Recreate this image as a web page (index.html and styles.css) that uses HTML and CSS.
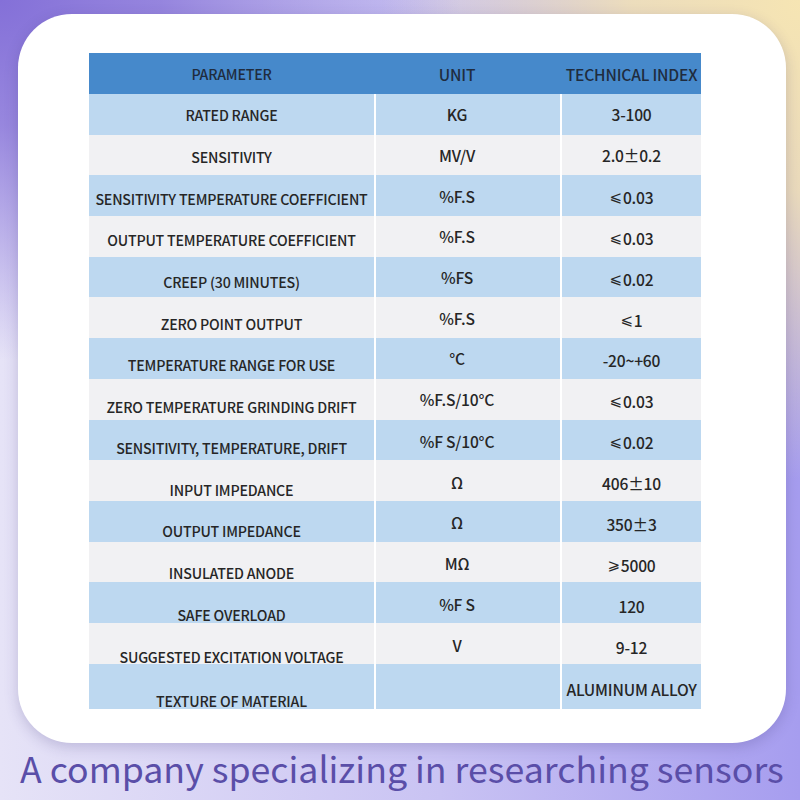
FILE: index.html
```html
<!DOCTYPE html>
<html>
<head>
<meta charset="utf-8">
<link rel="stylesheet" href="styles.css">
</head>
<body>
<div class="page">
  <div class="card">
    <div class="spec">
      <div class="row head">
        <div class="cell">PARAMETER</div>
        <div class="cell unit">UNIT</div>
        <div class="cell c3">TECHNICAL INDEX</div>
      </div>
      <div class="row blue"><div class="cell c1">RATED RANGE</div><div class="cell unit">KG</div><div class="cell c3">3-100</div></div>
      <div class="row gray"><div class="cell c1">SENSITIVITY</div><div class="cell unit">MV/V</div><div class="cell c3">2.0±0.2</div></div>
      <div class="row blue"><div class="cell c1">SENSITIVITY TEMPERATURE COEFFICIENT</div><div class="cell unit">%F.S</div><div class="cell c3"><span class="sym">⩽</span>0.03</div></div>
      <div class="row gray"><div class="cell c1">OUTPUT TEMPERATURE COEFFICIENT</div><div class="cell unit">%F.S</div><div class="cell c3"><span class="sym">⩽</span>0.03</div></div>
      <div class="row blue"><div class="cell c1">CREEP (30 MINUTES)</div><div class="cell unit">%FS</div><div class="cell c3"><span class="sym">⩽</span>0.02</div></div>
      <div class="row gray"><div class="cell c1">ZERO POINT OUTPUT</div><div class="cell unit">%F.S</div><div class="cell c3"><span class="sym">⩽</span> 1</div></div>
      <div class="row blue"><div class="cell c1">TEMPERATURE RANGE FOR USE</div><div class="cell unit">°C</div><div class="cell c3">-20~+60</div></div>
      <div class="row gray"><div class="cell c1">ZERO TEMPERATURE GRINDING DRIFT</div><div class="cell unit">%F.S/10°C</div><div class="cell c3"><span class="sym">⩽</span>0.03</div></div>
      <div class="row blue"><div class="cell c1">SENSITIVITY, TEMPERATURE, DRIFT</div><div class="cell unit">%F S/10°C</div><div class="cell c3"><span class="sym">⩽</span>0.02</div></div>
      <div class="row gray"><div class="cell c1">INPUT IMPEDANCE</div><div class="cell unit">Ω</div><div class="cell c3">406±10</div></div>
      <div class="row blue"><div class="cell c1">OUTPUT IMPEDANCE</div><div class="cell unit">Ω</div><div class="cell c3">350±3</div></div>
      <div class="row gray"><div class="cell c1">INSULATED ANODE</div><div class="cell unit">MΩ</div><div class="cell c3"><span class="sym">⩾</span>5000</div></div>
      <div class="row blue"><div class="cell c1">SAFE OVERLOAD</div><div class="cell unit">%F S</div><div class="cell c3">120</div></div>
      <div class="row gray"><div class="cell c1">SUGGESTED EXCITATION VOLTAGE</div><div class="cell unit">V</div><div class="cell c3">9-12</div></div>
      <div class="row blue last"><div class="cell c1">TEXTURE OF MATERIAL</div><div class="cell unit"></div><div class="cell c3">ALUMINUM ALLOY</div></div>
    </div>
  </div>
  <div class="caption">A company specializing in researching sensors</div>
</div>
</body>
</html>
```

FILE: styles.css
```css
html, body {
  margin: 0;
  padding: 0;
}
body {
  width: 800px;
  height: 800px;
  overflow: hidden;
  font-family: "Noto Sans CJK SC", "Noto Sans", sans-serif;
  background:
    radial-gradient(ellipse 460px 360px at 0% 0%, #8470d8 0%, rgba(132,112,216,0.8) 35%, rgba(132,112,216,0) 100%),
    radial-gradient(ellipse 420px 480px at 100% 0%, #f6e5b3 0%, rgba(246,229,179,0.85) 40%, rgba(246,229,179,0) 100%),
    linear-gradient(to right, #e6e3f7 0%, #c9c3f3 55%, #a69def 100%);
}
.page {
  padding: 14px 0 0 18px;
}
.card {
  width: 768px;
  height: 729px;
  box-sizing: border-box;
  padding: 39px 0 0 71px;
  background: #ffffff;
  border-radius: 54px;
  box-shadow: 0 4px 14px rgba(60, 50, 120, 0.22);
}
.spec {
  width: 612px;
  background: #ffffff;
}
.row {
  display: grid;
  grid-template-columns: 285px 184px 139px;
  column-gap: 2px;
  height: 40.7px;
}
.row.head {
  height: 41px;
  background: #4689cb;
}
.row.last {
  height: 42.2px;
}
.cell {
  display: flex;
  align-items: center;
  justify-content: center;
  box-sizing: border-box;
  font-size: 14.2px;
  font-weight: 500;
  line-height: 16px;
  color: #262626;
  white-space: nowrap;
  letter-spacing: -0.2px;
}
.unit, .c3 {
  font-size: 15.6px;
}
.head .cell {
  color: #1f2c3e;
  padding-top: 0;
}
.blue .cell { background: #bdd8f0; }
.gray .cell { background: #f1f1f3; }
.unit {
  padding-right: 22px;
}
.sym {
  font-family: "DejaVu Sans", sans-serif;
  font-size: 15px;
  margin-right: 1px;
}

/* original sheet drifts: the parameter names sit lower row by row */
.row:nth-child(2) .c1 { padding-top: 2px; }
.row:nth-child(3) .c1 { padding-top: 4px; }
.row:nth-child(4) .c1 { padding-top: 6px; }
.row:nth-child(5) .c1 { padding-top: 8px; }
.row:nth-child(6) .c1 { padding-top: 10px; }
.row:nth-child(7) .c1 { padding-top: 12px; }
.row:nth-child(8) .c1 { padding-top: 13px; }
.row:nth-child(9) .c1 { padding-top: 15px; }
.row:nth-child(10) .c1 { padding-top: 17px; }
.row:nth-child(11) .c1 { padding-top: 19px; }
.row:nth-child(12) .c1 { padding-top: 20px; }
.row:nth-child(13) .c1 { padding-top: 22px; }
.row:nth-child(14) .c1 { padding-top: 24px; }
.row:nth-child(15) .c1 { padding-top: 26px; }
.row:nth-child(16) .c1 { padding-top: 29px; }

.row:nth-child(n+4) .c3 { padding-top: 3px; }
.row:nth-child(n+5) .c3 { padding-top: 4px; }
.row:nth-child(n+10) .c3 { padding-top: 5px; }
.row:nth-child(n+12) .c3 { padding-top: 6px; }
.row:nth-child(16) .c3 { padding-top: 6px; }
.row:nth-child(n+10) .unit { padding-top: 2px; }

.caption {
  margin: 3px 0 0 2px;
  font-size: 35.7px;
  line-height: 44px;
  color: #5a4ea8;
  white-space: nowrap;
}
```
